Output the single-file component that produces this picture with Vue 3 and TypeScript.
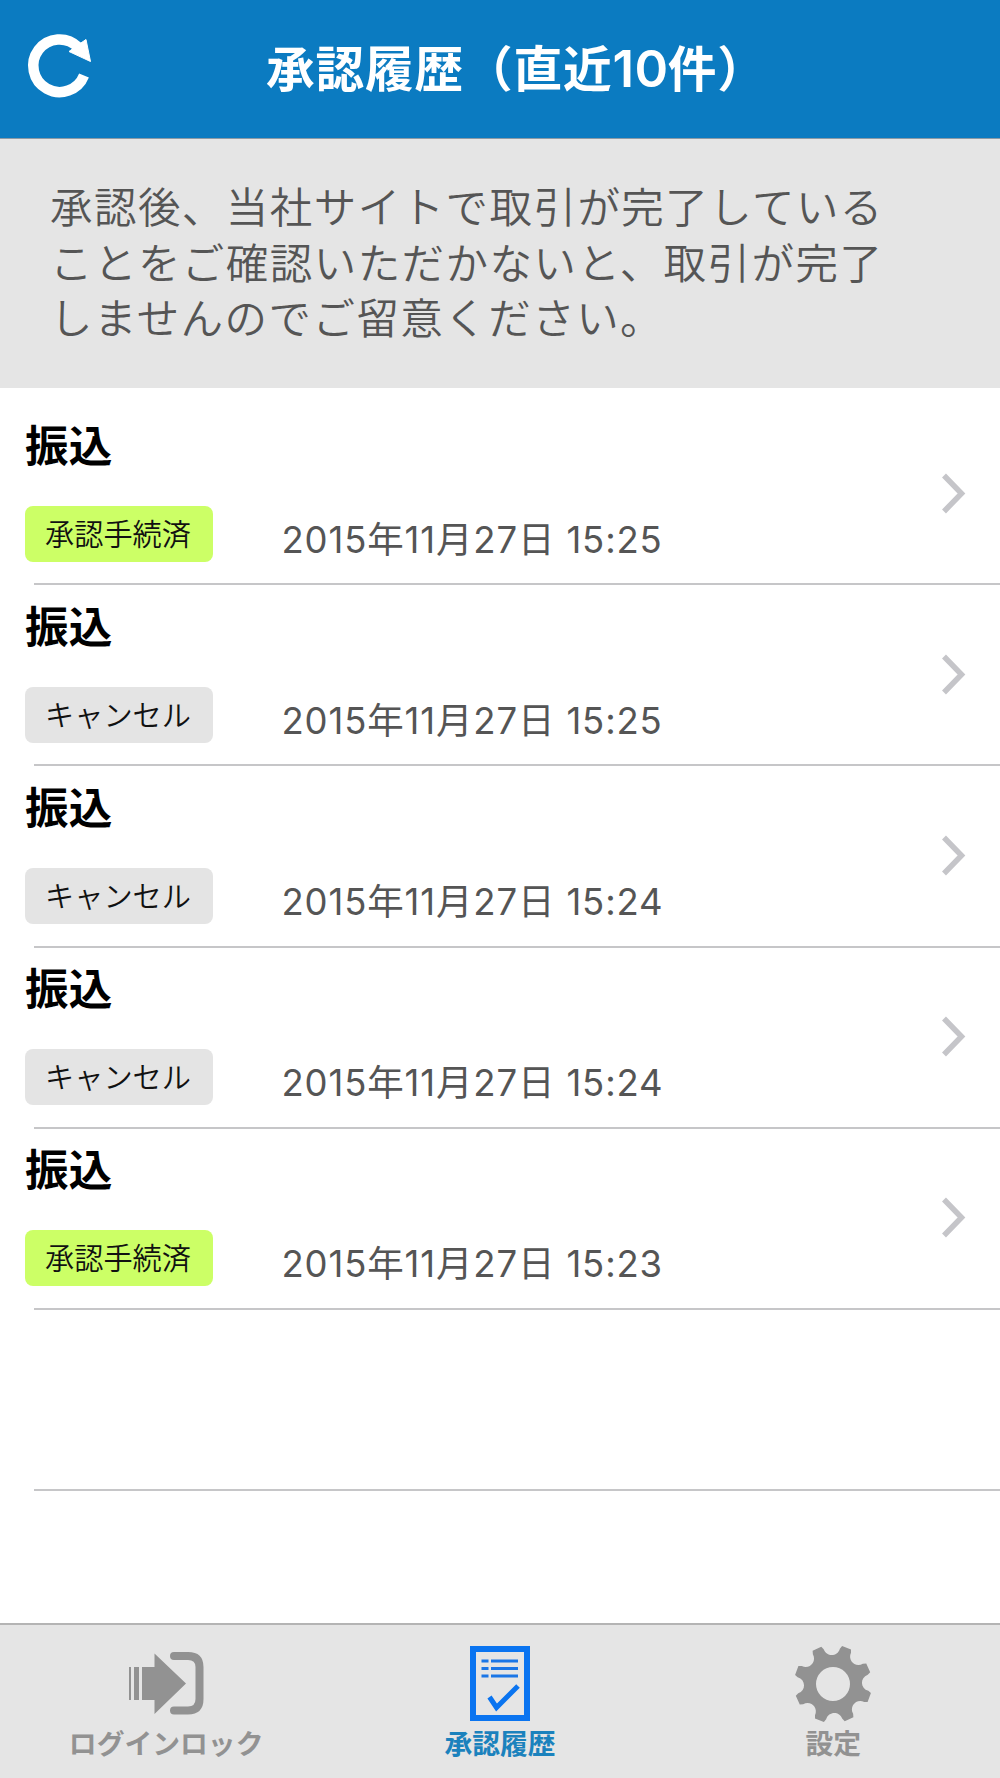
<script setup lang="ts">
interface HistoryItem {
  id: number
  title: string
  status: 'approved' | 'cancelled'
  date: string
}

const items: HistoryItem[] = [
  { id: 1, title: '振込', status: 'approved', date: '2015年11月27日 15:25' },
  { id: 2, title: '振込', status: 'cancelled', date: '2015年11月27日 15:25' },
  { id: 3, title: '振込', status: 'cancelled', date: '2015年11月27日 15:24' },
  { id: 4, title: '振込', status: 'cancelled', date: '2015年11月27日 15:24' },
  { id: 5, title: '振込', status: 'approved', date: '2015年11月27日 15:23' },
]

const statusLabel = { approved: '承認手続済', cancelled: 'キャンセル' }

const noteLines = [
  '承認後、当社サイトで取引が完了している',
  'ことをご確認いただかないと、取引が完了',
  'しませんのでご留意ください。',
]

// Eight-toothed gear outline centred on the origin.
function gearPath(): string {
  const at = (r: number, deg: number): string => {
    const a = ((deg - 90) * Math.PI) / 180
    return `${(r * Math.cos(a)).toFixed(2)} ${(r * Math.sin(a)).toFixed(2)}`
  }
  let d = ''
  for (let i = 0; i < 8; i++) {
    const c = i * 45 + 20.5
    d += `${i === 0 ? 'M' : 'L'}${at(39, c - 7)}L${at(39, c + 7)}L${at(36, c + 9.5)}`
    d += `C${at(27.5, c + 11)} ${at(27.5, c + 34)} ${at(36, c + 35.5)}`
  }
  return `${d}ZM17 0A17 17 0 1 0 -17 0A17 17 0 1 0 17 0Z`
}
const gear = gearPath()
</script>

<template>
  <div class="screen">
    <header class="bar">
      <svg class="reload" viewBox="0 0 70 70" width="70" height="70">
        <path d="M60 44.5A26.300 26.300 0 1 1 54 16" fill="none" stroke="#fff" stroke-width="10.5" />
        <path d="M62 8.5L66.500 30.500L45 20.500L51 16Z" fill="#fff" stroke="#fff" stroke-width="1" />
      </svg>
      <h1 class="heading">承認履歴（直近<span class="count">10</span>件）</h1>
    </header>

    <section class="note">
      <div v-for="line in noteLines" :key="line" class="note-line">{{ line }}</div>
    </section>

    <main class="list">
      <article v-for="item in items" :key="item.id" class="row">
        <div class="body">
          <div class="title">{{ item.title }}</div>
          <div class="meta">
            <span class="badge" :class="item.status">{{ statusLabel[item.status] }}</span>
            <span class="date">{{ item.date }}</span>
          </div>
        </div>
        <svg class="chevron" viewBox="0 0 28 42" width="28" height="42">
          <path d="M4 2.5L21.5 20.5L4 38.5" fill="none" stroke="#c5c5c9" stroke-width="5.5" />
        </svg>
      </article>
      <div class="row blank"></div>
    </main>

    <nav class="tabs">
      <div class="tab">
        <svg class="icon" viewBox="3 0 80 80" width="80" height="80">
          <g fill="#929292">
            <path d="M5 22h2v33h-2zM10 22h5v33h-5zM18 22h12.5V8.5L62 38.5L30.5 69V55H18z" />
          </g>
          <path d="M50 11H64Q75.500 11 75.500 22V54Q75.500 65.500 64 65.500H50" fill="none" stroke="#929292" stroke-width="8" stroke-linecap="round" />
        </svg>
        <span class="label login">ログインロック</span>
      </div>
      <div class="tab active">
        <svg class="icon" viewBox="0 0 80 80" width="80" height="80">
          <rect x="13" y="4" width="54" height="69" fill="none" stroke="#0a74f0" stroke-width="6" />
          <path d="M21.500 16h7M21.500 23.500h7M21.500 31h7M31 16h27M31 23.500h27M31 31h27" stroke="#1b76e6" stroke-width="3" />
          <path d="M29.500 52L36.500 62.500L58 41" fill="none" stroke="#0a74f0" stroke-width="5" />
        </svg>
        <span class="label">承認履歴</span>
      </div>
      <div class="tab">
        <svg class="icon" viewBox="-40 -39 80 80" width="80" height="80">
          <path :d="gear" fill="#929292" fill-rule="evenodd" />
        </svg>
        <span class="label">設定</span>
      </div>
    </nav>
  </div>
</template>

<style>
body {
  margin: 0;
  background: #fff;
}
</style>

<style scoped>
.screen {
  width: 1000px;
  height: 1778px;
  display: flex;
  flex-direction: column;
  overflow: hidden;
  background: #fff;
  font-family: Inter, 'Noto Sans CJK JP', sans-serif;
}
.bar {
  box-sizing: border-box;
  height: 139px;
  flex: none;
  display: flex;
  align-items: center;
  background: #0b7bc1;
  border-bottom: 1px solid #8b9aa6;
}
.reload {
  flex: none;
  margin: -6px 0 0 24px;
}
.heading {
  margin: 1px 0 0 172px;
  font-size: 48.7px;
  font-weight: 600;
  line-height: 60px;
  letter-spacing: 0.800px;
  white-space: nowrap;
  color: #fff;
}
.count {
  margin-right: -1px;
  font-size: 51px;
  font-weight: 600;
  letter-spacing: 0.500px;
  line-height: 1;
}
.note {
  box-sizing: border-box;
  height: 249px;
  flex: none;
  padding: 38px 0 0 50px;
  background: #e5e5e5;
}
.note-line {
  height: 55.700px;
  font-family: 'Noto Sans CJK JP', sans-serif;
  font-size: 42.500px;
  font-weight: 350;
  line-height: 55.700px;
  letter-spacing: 1.450px;
  white-space: nowrap;
  color: #555;
}
.list {
  flex: 1;
  padding-top: 16px;
}
.row {
  box-sizing: border-box;
  height: 181.200px;
  display: flex;
  justify-content: space-between;
  padding-left: 25px;
  background: linear-gradient(#c6c6c8, #c6c6c8) 34px 100% / 100% 2px no-repeat;
}
.title {
  margin-top: 9.500px;
  height: 60px;
  font-family: 'Noto Sans CJK JP', sans-serif;
  font-size: 43.500px;
  font-weight: 600;
  line-height: 60px;
  letter-spacing: 0.300px;
  color: #000;
}
.meta {
  display: flex;
  margin-top: 32px;
}
.badge {
  box-sizing: border-box;
  width: 188px;
  height: 56px;
  padding-right: 2px;
  border-radius: 8px;
  font-family: 'Noto Sans CJK JP', sans-serif;
  font-size: 29.200px;
  font-weight: 350;
  line-height: 53px;
  text-align: center;
  color: #111;
}
.approved {
  background: #ccff66;
}
.cancelled {
  background: #e4e4e4;
}
.date {
  margin: 6px 0 0 68.500px;
  font-size: 36.500px;
  font-weight: 380;
  line-height: 56px;
  letter-spacing: 0.850px;
  white-space: nowrap;
  color: #555;
}
.chevron {
  flex: none;
  margin: 68.500px 32.500px 0 0;
}
.tabs {
  box-sizing: border-box;
  height: 155px;
  flex: none;
  display: flex;
  border-top: 2px solid #b4b4b4;
  background: #e5e5e5;
}
.tab {
  flex: 1;
  display: flex;
  flex-direction: column;
  align-items: center;
  color: #929292;
}
.active {
  color: #1b82bd;
}
.icon {
  flex: none;
  margin-top: 20px;
}
.label {
  margin-top: -5px;
  font-family: 'Noto Sans CJK JP', sans-serif;
  font-size: 27.800px;
  font-weight: 600;
  line-height: 44px;
  white-space: nowrap;
}
.login {
  margin-left: -1px;
}
</style>
